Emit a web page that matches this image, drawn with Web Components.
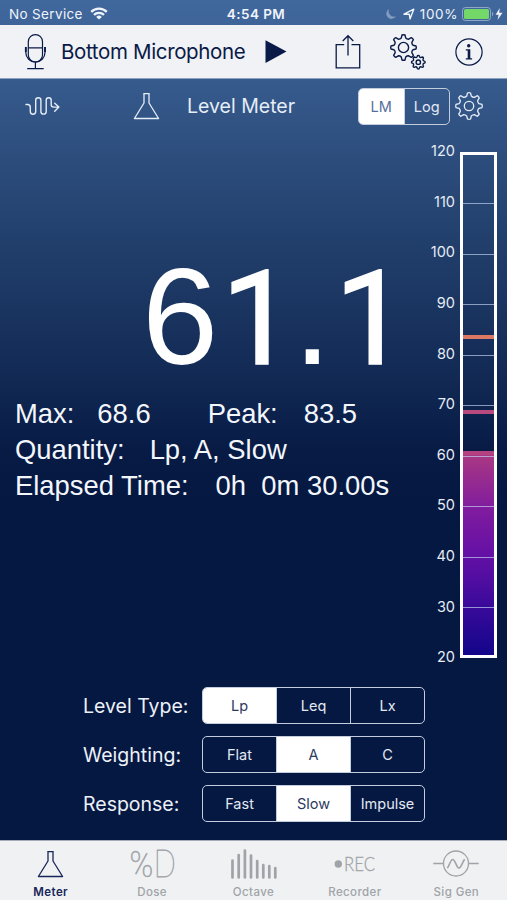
<!DOCTYPE html>
<html lang="en">
<head>
<meta charset="utf-8">
<title>Level Meter</title>
<style>
  body {
    margin: 0;
    width: 507px;
    height: 900px;
    overflow: hidden;
    font-family: Inter, "Liberation Sans", sans-serif;
  }
</style>
</head>
<body>
<meter-app></meter-app>

<script>
// Builds a closed gear outline around (cx, cy)
function gearPath(cx, cy, outer, inner, teeth) {
  const step = Math.PI * 2 / teeth
  const at = (r, a) => (cx + r * Math.sin(a)).toFixed(2) + ' ' + (cy - r * Math.cos(a)).toFixed(2)
  let d = ''
  for (let i = 0; i < teeth; i++) {
    const a = i * step
    d += (i ? 'L' : 'M') + at(inner, a - step * 0.29)
    d += 'L' + at(outer, a - step * 0.15)
    d += 'Q' + at(outer + 0.5, a) + ' ' + at(outer, a + step * 0.15)
    d += 'L' + at(inner, a + step * 0.29)
    d += 'Q' + at(inner - 0.9, a + step * 0.5) + ' ' + at(inner, a + step * 0.71)
  }
  return d + 'Z'
}

// name: [width, height, content]
const icons = {
  wifi: [18, 13, `<g fill="none" stroke="currentColor" stroke-width="2.3"><path d="M1.2 4.9a11 11 0 0 1 15.6 0"/><path d="M4 7.9a7 7 0 0 1 10 0"/></g><path fill="currentColor" d="M9 12.6 6.2 9.9a4 4 0 0 1 5.6 0z"/>`],
  moon: [12, 12, `<path fill="currentColor" opacity=".38" d="M4.2 1A5.2 5.2 0 1 0 11 8.2 5.3 5.3 0 0 1 4.2 1z"/>`],
  location: [12, 12, `<path fill="none" stroke="currentColor" stroke-width="1.4" stroke-linejoin="round" d="M1 6.2 10.8 1.2 7 11 6.3 6.1z"/>`],
  battery: [33, 14, `<rect x=".5" y=".5" width="28" height="13" rx="3" fill="none" stroke="currentColor" stroke-opacity=".45"/><rect x="2" y="2" width="25" height="10" rx="1.5" fill="#74d869"/><path fill="currentColor" fill-opacity=".45" d="M30 4.8a2.5 2.5 0 0 1 0 4.4z"/>`],
  bolt: [8, 12, `<path fill="currentColor" d="M4.8 0 .6 6.8h3L2.6 12 7.5 4.8H4.2z"/>`],
  mic: [22, 37, `<g fill="none" stroke="currentColor" stroke-width="1.2"><rect x="4.3" y="1.6" width="14.2" height="27.4" rx="7.1"/><path d="M4.3 14.8h14.2M1.8 14v5.5a9.6 9.6 0 0 0 19.2 0V14M11.4 29.2v6M3.2 35.7h16.5"/><path stroke-width="1.8" d="M1.8 14v5M21 14v5"/></g>`],
  play: [22, 25, `<path fill="currentColor" d="M.5 1.2 21.5 12.5.5 24z"/>`],
  share: [26, 35, `<g fill="none" stroke="currentColor" stroke-width="1.3"><path d="M9.2 10.7H1.2V33.8H24.7V10.7H16.5"/><path d="M13 21.5V2M7.7 7 13 1.7 18.3 7"/></g>`],
  gears: [36, 36, `<g fill="none" stroke="currentColor" stroke-width="1.4" stroke-linejoin="round"><path d="${gearPath(13.5, 13.5, 12.6, 9.8, 8)}"/><circle cx="13.5" cy="13.5" r="5.1"/><path d="${gearPath(28.3, 28.2, 6.6, 5.6, 8)}"/><circle cx="28.3" cy="28.2" r="2.2"/></g>`],
  info: [28, 28, `<circle cx="14" cy="14" r="13.1" fill="none" stroke="currentColor" stroke-width="1.2"/><g fill="currentColor"><circle cx="13.7" cy="7.7" r="1.7"/><path d="M10.8 11.3h4.5v8.9h1.8v1.2h-6.3v-1.2h1.9v-7.7h-1.9z"/></g>`],
  wave: [35, 20, `<path fill="none" stroke="currentColor" stroke-width="1.4" stroke-linecap="round" stroke-linejoin="round" d="M1 8.5h1.7q2.6 0 2.6 3V15.5a2.7 2.7 0 0 0 5.4 0V4.3a2.6 2.6 0 0 1 5.2 0V15.5a2.6 2.6 0 0 0 5.3 0V4.3a2.5 2.5 0 0 1 5 0V8.5q0 2.6 2.6 2.6h4.8M29.7 7.2l4.2 3.9-4.2 4.2"/>`],
  flask: [27, 28, `<path fill="none" stroke="currentColor" stroke-width="1.3" stroke-linejoin="round" d="M10.3 1.7h6.4M11 1.7V11L1.4 26.5h24.2L16 11V1.7"/>`],
  gear: [28, 28, `<g fill="none" stroke="currentColor" stroke-width="1.3" stroke-linejoin="round"><path d="${gearPath(14, 14, 13.1, 10.2, 8)}"/><circle cx="14" cy="14" r="4.7"/></g>`],
  dose: [48, 50, `<g fill="currentColor" stroke="currentColor"><text x="1.5" y="38.3" font-family="Roboto, sans-serif" font-weight="100" font-size="37" textLength="23.8" lengthAdjust="spacingAndGlyphs" stroke-width=".6">%</text><text x="25.7" y="38.3" font-family="Lato, sans-serif" font-weight="200" font-size="37" textLength="22" lengthAdjust="spacingAndGlyphs" stroke-width=".8">D</text></g>`],
  octave: [48, 32, `<path fill="none" stroke="currentColor" stroke-width="2.7" stroke-linecap="round" d="M2.5 12.5v17M8.7 7v22.5M14.9 2.5v27M21 7.5v22M27.2 13v16.5M33.3 17v12.5M39.3 18v11.5M45.3 20v9.5"/>`],
  rec: [42, 40, `<circle cx="4.3" cy="20" r="3.7" fill="currentColor"/><text x="10" y="27.3" font-family="Lato, sans-serif" font-weight="300" font-size="19" textLength="31" lengthAdjust="spacingAndGlyphs" fill="currentColor" stroke="currentColor" stroke-width=".3">REC</text>`],
  siggen: [46, 32, `<g fill="none" stroke="currentColor" stroke-width="1.3"><circle cx="23" cy="15.5" r="12.5"/><path d="M.3 15.5h10.2M35.5 15.5h10.2"/><path stroke-width="1.6" stroke-linecap="round" d="M14.7 19.5c2-3 3-8 5-8 2.6 0 3.8 8.6 6.2 8.6 2 0 3.3-5.2 5.4-8.3"/></g>`]
}

class UiIcon extends HTMLElement {
  connectedCallback() {
    const [w, h, content] = icons[this.getAttribute('name')]
    this.attachShadow({ mode: 'open' }).innerHTML = `
      <style>
        :host { display: block; flex: none; width: ${w}px; height: ${h}px; }
        svg { display: block; overflow: visible; }
      </style>
      <svg width="${w}" height="${h}" viewBox="0 0 ${w} ${h}">${content}</svg>
    `
  }
}
customElements.define('ui-icon', UiIcon)

class StatusBar extends HTMLElement {
  constructor() {
    super()
    this.attachShadow({ mode: 'open' }).innerHTML = `
      <style>
        :host {
          display: grid;
          grid-template-columns: 1fr auto 1fr;
          align-items: center;
          height: 25px;
          padding: 2px 4px 0 9px;
          box-sizing: border-box;
          color: #f0f4fa;
          font-size: 13.5px;
          line-height: 20px;
        }
        div { display: flex; align-items: center; }
        .left { gap: 7px; }
        .left span { letter-spacing: 0.35px; }
        .time { font-weight: 600; letter-spacing: 0.45px; }
        .right { justify-content: flex-end; }
        .right span { margin: 0 4px 0 5px; letter-spacing: 0.6px; }
        .right ui-icon[name=location] { margin-left: 6px; }
      </style>
      <div class="left"><span>No Service</span><ui-icon name="wifi"></ui-icon></div>
      <div class="time">4:54 PM</div>
      <div class="right">
        <ui-icon name="moon"></ui-icon>
        <ui-icon name="location"></ui-icon>
        <span>100%</span>
        <ui-icon name="battery"></ui-icon>
        <ui-icon name="bolt"></ui-icon>
      </div>
    `
  }
}
customElements.define('status-bar', StatusBar)

class ToolBar extends HTMLElement {
  constructor() {
    super()
    this.attachShadow({ mode: 'open' }).innerHTML = `
      <style>
        :host {
          display: flex;
          align-items: center;
          height: 54px;
          padding: 0 24px;
          box-sizing: border-box;
          background: #f0f2f5;
          color: #0a1a48;
          border-bottom: 1px solid #8fa2bd;
        }
        .name { width: 204px; padding-left: 15px; font-size: 20.5px; letter-spacing: -0.35px; white-space: nowrap; }
        .actions { display: flex; align-items: center; gap: 29px; margin-left: auto; }
      </style>
      <ui-icon name="mic"></ui-icon>
      <span class="name"><slot></slot></span>
      <ui-icon name="play"></ui-icon>
      <div class="actions">
        <ui-icon name="share"></ui-icon>
        <ui-icon name="gears"></ui-icon>
        <ui-icon name="info"></ui-icon>
      </div>
    `
  }
}
customElements.define('tool-bar', ToolBar)

// options="A,B,C" selected="0"
class SegmentControl extends HTMLElement {
  connectedCallback() {
    const selected = Number(this.getAttribute('selected'))
    const options = this.getAttribute('options').split(',')
    this.attachShadow({ mode: 'open' }).innerHTML = `
      <style>
        :host {
          display: flex;
          flex: none;
          height: 37px;
          box-sizing: border-box;
          border: 1.5px solid #c3cddd;
          border-radius: 5px;
          overflow: hidden;
          color: #e3e8f2;
          font-size: 14.5px;
        }
        span { flex: 1 1 0; display: flex; align-items: center; justify-content: center; }
        span + span { border-left: 1px solid #c3cddd; }
        span.on { background: #fff; color: var(--on-color, #2c3a61); }
      </style>
      ${options.map((o, i) => `<span class="${i === selected ? 'on' : ''}">${o}</span>`).join('')}
    `
  }
}
customElements.define('segment-control', SegmentControl)

class MeterHeader extends HTMLElement {
  constructor() {
    super()
    this.attachShadow({ mode: 'open' }).innerHTML = `
      <style>
        :host {
          display: flex;
          align-items: center;
          height: 54px;
          padding: 0 24px 0 25px;
          box-sizing: border-box;
          color: #e6edf7;
        }
        ui-icon[name=flask] { margin-left: 73px; }
        .title { flex: 1; padding-left: 27px; font-size: 19.5px; white-space: nowrap; }
        segment-control { width: 92px; margin-right: 5px; --on-color: #56709b; }
      </style>
      <ui-icon name="wave"></ui-icon>
      <ui-icon name="flask"></ui-icon>
      <span class="title"><slot></slot></span>
      <segment-control options="LM,Log" selected="0"></segment-control>
      <ui-icon name="gear"></ui-icon>
    `
  }
}
customElements.define('meter-header', MeterHeader)

class LevelReadout extends HTMLElement {
  constructor() {
    super()
    this.attachShadow({ mode: 'open' }).innerHTML = `
      <style>
        :host {
          display: flex;
          flex-direction: column;
          flex: 1;
          padding: 107px 0 0 15px;
          font-family: "Liberation Sans", Arial, sans-serif;
          color: #fff;
        }
        .value { height: 154px; padding-left: 127px; font-size: 137px; line-height: 154px; white-space: nowrap; }
        /* footless ones */
        .value span { margin: 0 -1.5px 0 3px; font-family: Roboto, sans-serif; font-size: 131px; -webkit-text-stroke: 1.5px #fff; }
        .line { display: flex; height: 36px; line-height: 36px; font-size: 27.4px; white-space: pre; color: #f3f6fb; }
        .value + .line { margin-top: 2px; }
        .line span + span { margin-left: var(--gap, 23px); }
      </style>
      <div class="value">6<span>1</span>.<span>1</span></div>
      <div class="line"><span>Max:</span><span>68.6</span><span style="--gap: 57px">Peak:</span><span style="--gap: 26px">83.5</span></div>
      <div class="line"><span>Quantity:</span><span style="--gap: 25px">Lp, A, Slow</span></div>
      <div class="line"><span>Elapsed Time:</span><span style="--gap: 27px">0h  0m 30.00s</span></div>
    `
  }
}
customElements.define('level-readout', LevelReadout)

// Vertical dB scale from 120 down to 20
class LevelScale extends HTMLElement {
  constructor() {
    super()
    const labels = []
    for (let v = 120; v >= 20; v -= 10) labels.push(`<span>${v}</span>`)
    this.attachShadow({ mode: 'open' }).innerHTML = `
      <style>
        :host { display: flex; flex: none; gap: 5px; padding: 10px 10px 0 0; height: 525px; box-sizing: border-box; }
        .labels {
          display: flex;
          flex-direction: column;
          justify-content: space-between;
          height: 522.5px;
          text-align: right;
          font: 14.5px/16px Inter, sans-serif;
          color: #e6ecf5;
        }
        .bar {
          position: relative;
          display: grid;
          grid-template-rows: 49px repeat(8, 50.5px) 1fr;
          width: 37px;
          height: 506px;
          margin-top: 9px;
          box-sizing: border-box;
          border: 3px solid #fff;
        }
        .fill {
          position: absolute;
          inset: 296px 0 0;
          border-top: 4px solid #b64180;
          background: linear-gradient(#a93883, #7f1b9f 55px, #6410a5 100px, #3b0a9b 150px, #12068a);
        }
        .bar i { position: relative; border-bottom: 1.5px solid rgba(190, 205, 235, .7); }
        .bar i:last-of-type { border: 0; }
        .mark { position: absolute; left: 0; right: 0; height: 4px; }
      </style>
      <div class="labels">${labels.join('')}</div>
      <div class="bar">
        <div class="fill"></div>
        ${'<i></i>'.repeat(10)}
        <div class="mark" style="top: 180px; background: #dc7964"></div>
        <div class="mark" style="top: 255px; background: #b84a80"></div>
      </div>
    `
  }
}
customElements.define('level-scale', LevelScale)

class SettingRow extends HTMLElement {
  constructor() {
    super()
    this.attachShadow({ mode: 'open' }).innerHTML = `
      <style>
        :host { display: grid; grid-template-columns: 119px 223px; align-items: center; color: #edf1f8; font-size: 19.5px; white-space: nowrap; }
      </style>
      <span><slot name="label"></slot></span>
      <slot></slot>
    `
  }
}
customElements.define('setting-row', SettingRow)

class TabItem extends HTMLElement {
  connectedCallback() {
    this.attachShadow({ mode: 'open' }).innerHTML = `
      <style>
        :host { display: flex; flex-direction: column; align-items: center; flex: 1 1 0; color: #a0a3a7; }
        :host([active]) { color: #17265a; }
        .icon { display: flex; align-items: center; height: 32px; }
        .label { margin-top: 5px; font-size: 11.5px; line-height: 14px; font-weight: 500; letter-spacing: 0.4px; }
        :host([active]) .label { font-weight: 600; }
      </style>
      <div class="icon"><ui-icon name="${this.getAttribute('icon')}"></ui-icon></div>
      <div class="label"><slot></slot></div>
    `
  }
}
customElements.define('tab-item', TabItem)

class MeterApp extends HTMLElement {
  constructor() {
    super()
    this.attachShadow({ mode: 'open' }).innerHTML = `
      <style>
        :host {
          display: flex;
          flex-direction: column;
          width: 507px;
          height: 900px;
          background: linear-gradient(#41689d 0, #35598b 90px, #2b4b7a 170px, #203d69 255px, #152e59 350px, #0e254f 400px, #071b45 450px, #051842 500px);
        }
        main { display: flex; height: 525px; }
        .settings { display: flex; flex-direction: column; gap: 12px; margin: 29px 0 0 83px; }
        nav { display: flex; margin-top: auto; height: 60px; padding-top: 7px; box-sizing: border-box; background: #eff1f3; border-top: 1px solid #a5abb9; }
      </style>
      <status-bar></status-bar>
      <tool-bar>Bottom Microphone</tool-bar>
      <meter-header>Level Meter</meter-header>
      <main>
        <level-readout></level-readout>
        <level-scale></level-scale>
      </main>
      <div class="settings">
        <setting-row><span slot="label">Level Type:</span><segment-control options="Lp,Leq,Lx" selected="0"></segment-control></setting-row>
        <setting-row><span slot="label">Weighting:</span><segment-control options="Flat,A,C" selected="1"></segment-control></setting-row>
        <setting-row><span slot="label">Response:</span><segment-control options="Fast,Slow,Impulse" selected="1"></segment-control></setting-row>
      </div>
      <nav>
        <tab-item icon="flask" active>Meter</tab-item>
        <tab-item icon="dose">Dose</tab-item>
        <tab-item icon="octave">Octave</tab-item>
        <tab-item icon="rec">Recorder</tab-item>
        <tab-item icon="siggen">Sig Gen</tab-item>
      </nav>
    `
  }
}
customElements.define('meter-app', MeterApp)
</script>
</body>
</html>
